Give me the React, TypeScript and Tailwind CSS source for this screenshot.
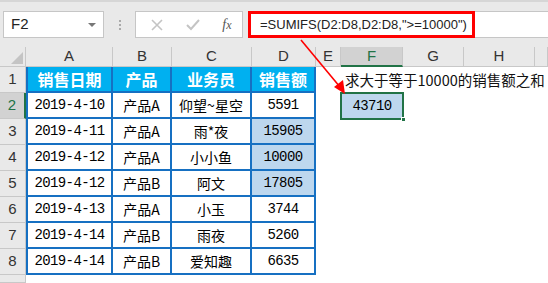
import React from 'react';

const widths = ['w-[87px]', 'w-[59px]', 'w-[80px]', 'w-[64px]', 'w-[25px]', 'w-[62px]', 'w-[61px]', 'w-[71px]', 'w-[13px]'];
const letters = ['A', 'B', 'C', 'D', 'E', 'F', 'G', 'H', ''];

const heads = ['销售日期', '产品', '业务员', '销售额'];

const rows = [
  ['2019-4-10', '产品A', '仰望~星空', '5591'],
  ['2019-4-11', '产品A', '雨*夜', '15905'],
  ['2019-4-12', '产品A', '小小鱼', '10000'],
  ['2019-4-12', '产品B', '阿文', '17805'],
  ['2019-4-13', '产品A', '小玉', '3744'],
  ['2019-4-14', '产品B', '雨夜', '5260'],
  ['2019-4-14', '产品B', '爱知趣', '6635'],
];

const mono = "font-['Liberation_Mono','Noto_Sans_CJK_SC',monospace] text-[14px] tracking-[-0.6px]";
const blue = 'border-r-2 border-b-2 border-[#1670c2]';

const RowHead = ({ n, active }: { n: string; active?: boolean }) => (
  <div
    className={`w-[26px] shrink-0 flex items-end justify-center pb-[2px] border-b border-[#c8c8c8] text-[15px] font-['Liberation_Sans',sans-serif] ${
      active ? 'bg-[#d2d2d2] border-r-2 border-r-[#217346] text-[#217346]' : 'bg-[#e9e9e9] border-r border-r-[#c8c8c8] text-[#333]'
    }`}
  >
    {n}
  </div>
);

export default function App() {
  return (
    <div className="relative w-[548px] h-[283px] overflow-hidden bg-white font-['Noto_Sans_CJK_SC',sans-serif]">
      {/* formula bar */}
      <div className="h-[47px] bg-[#e9e9e9] border-t-2 border-[#d6d6d6] flex items-start pt-[9px] pl-[3px]">
        <div className="w-[101px] h-[27px] bg-white border border-[#c6c6c6] flex items-center pl-[7px] pr-[7px] justify-between">
          <span className="text-[15px] text-[#222] font-['Liberation_Sans',sans-serif]">F2</span>
          <span className="w-0 h-0 border-l-[4px] border-r-[4px] border-t-[4px] border-l-transparent border-r-transparent border-t-[#777]" />
        </div>
        <div className="w-[31px] h-[27px] flex flex-col items-center justify-center gap-[2px]">
          <span className="w-[2px] h-[2px] bg-[#aaa]" />
          <span className="w-[2px] h-[2px] bg-[#aaa]" />
          <span className="w-[2px] h-[2px] bg-[#aaa]" />
        </div>
        <div className="w-[108px] h-[27px] bg-white border border-[#c6c6c6] flex items-center justify-around pl-[4px] pr-[0px]">
          <svg width="14" height="14" viewBox="0 0 14 14">
            <path d="M2 2 L12 12 M12 2 L2 12" stroke="#c4c4c4" strokeWidth="1.6" />
          </svg>
          <svg width="16" height="14" viewBox="0 0 16 14">
            <path d="M2 7 L6 11 L14 2" stroke="#c4c4c4" strokeWidth="2" fill="none" />
          </svg>
          <span className="text-[14px] italic text-[#555] font-['Liberation_Serif',serif]">
            f<span className="text-[12px]">x</span>
          </span>
        </div>
        <div className="flex-1 h-[27px] ml-[5px] bg-white border-y border-[#c6c6c6] flex">
          <div className="w-[227px] h-[27px] -mt-px border-[3px] border-[#ff0000] flex items-center pl-[9px] text-[13px] text-[#222] font-['Liberation_Sans',sans-serif] whitespace-nowrap">
            =SUMIFS(D2:D8,D2:D8,"&gt;=10000")
          </div>
        </div>
      </div>

      {/* column headers */}
      <div className="flex h-[20px] bg-[#e9e9e9]">
        <div className="w-[26px] shrink-0 border-r border-b border-[#c8c8c8] flex items-end justify-end p-[2px]">
          <svg width="12" height="12" viewBox="0 0 12 12">
            <polygon points="12,0 12,12 0,12" fill="#c4c4c4" />
          </svg>
        </div>
        {letters.map((l, i) => (
          <div
            key={i}
            className={`${widths[i]} shrink-0 flex items-center justify-center text-[15px] font-['Liberation_Sans',sans-serif] border-r border-[#c8c8c8] ${
              l === 'F' ? 'bg-[#d2d2d2] border-b-2 border-b-[#217346] text-[#217346]' : 'border-b border-b-[#c8c8c8] text-[#333]'
            }`}
          >
            {l}
          </div>
        ))}
      </div>

      {/* row 1 */}
      <div className="flex h-[26px]">
        <RowHead n="1" />
        {heads.map((h, i) => (
          <div key={i} className={`${widths[i]} shrink-0 bg-[#00b0f0] ${blue} ${i === 0 ? 'border-l-2' : ''} flex items-center justify-center text-white font-bold text-[16px]`}>
            {h}
          </div>
        ))}
        <div className="w-[25px] shrink-0" />
        <div className="w-[62px] shrink-0 flex items-center pl-[4px] whitespace-nowrap text-[14.5px] text-[#111]">
          求大于等于10000的销售额之和
        </div>
      </div>

      {rows.map((r, ri) => (
        <div key={ri} className="flex h-[26px]">
          <RowHead n={String(ri + 2)} active={ri === 0} />
          <div className={`w-[87px] shrink-0 ${blue} border-l-2 flex items-center justify-center ${mono} text-black`}>{r[0]}</div>
          <div className={`w-[59px] shrink-0 ${blue} flex items-center justify-center text-[14px] text-black`}>{r[1]}</div>
          <div className={`w-[80px] shrink-0 ${blue} flex items-center justify-center text-[14px] text-black`}>{r[2]}</div>
          <div
            className={`w-[64px] shrink-0 ${blue} flex items-center justify-center ${mono} text-black ${
              ri >= 1 && ri <= 3 ? 'bg-[#bdd7ee]' : ''
            }`}
          >
            {r[3]}
          </div>
          <div className="w-[25px] shrink-0" />
          {ri === 0 ? (
            <div className={`w-[62px] shrink-0 relative bg-[#bdd7ee] flex items-center justify-center ${mono} text-black`}>
              43710
              <div className="absolute -left-px -top-px -right-px -bottom-px border-2 border-[#217346]" />
              <div className="absolute -right-[3px] -bottom-[3px] w-[5px] h-[5px] bg-[#217346] border border-white" />
            </div>
          ) : null}
        </div>
      ))}

      {/* row 9 partial */}
      <div className="flex h-[8px]">
        <RowHead n="" />
      </div>

      {/* annotation arrow */}
      <svg className="absolute left-0 top-0 pointer-events-none" width="548" height="283">
        <line x1="301" y1="40" x2="340" y2="87" stroke="#ff0000" strokeWidth="1.6" />
        <polygon points="345,94 334,87 343,80" fill="#ff0000" />
      </svg>
    </div>
  );
}
